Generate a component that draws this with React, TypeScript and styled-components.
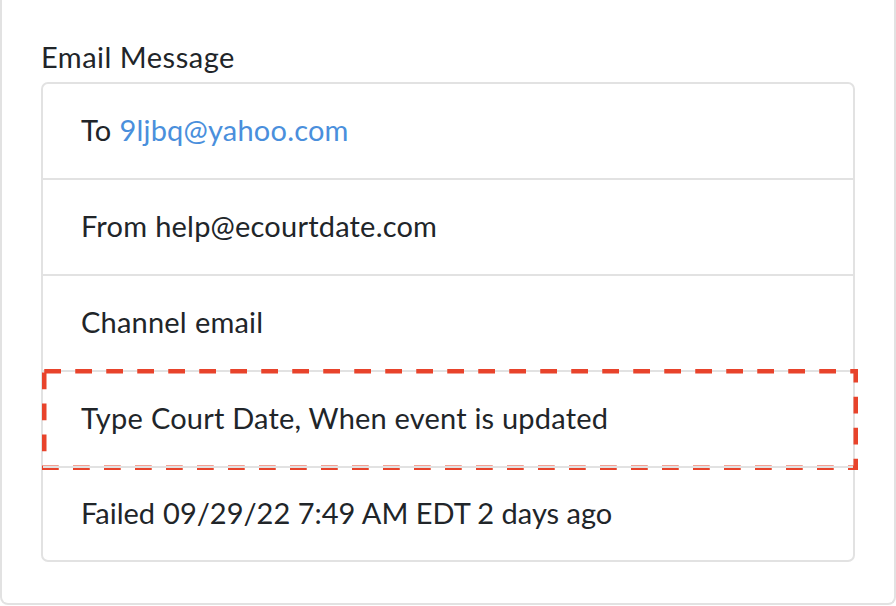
import React from 'react'
import styled, { createGlobalStyle } from 'styled-components'

const GlobalStyle = createGlobalStyle`
  html, body {
    margin: 0;
    padding: 0;
    background: #ffffff;
  }

  body {
    font-family: Lato, 'Noto Sans', sans-serif;
    color: #212529;
    -webkit-font-smoothing: antialiased;
  }
`

const Card = styled.section`
  box-sizing: border-box;
  width: 896px;
  height: 605px;
  border: 2px solid #e2e2e2;
  border-top: none;
  border-radius: 0 0 8px 8px;
  padding: 0 39px 0 39px;
`

const Title = styled.h5`
  margin: 0;
  padding-top: 41px;
  height: 41px;
  line-height: 32px;
  font-size: 29px;
  font-weight: 400;
  letter-spacing: 0.5px;
`

const List = styled.ul`
  list-style: none;
  margin: 0;
  padding: 0;
  width: 814px;
  box-sizing: border-box;
  border: 2px solid #e2e2e2;
  border-radius: 7px;
`

const Row = styled.li<{ $height?: number; $spacing?: number }>`
  position: relative;
  display: flex;
  align-items: center;
  height: ${(p) => (p.$height ?? 94) - 3}px;
  padding: 0 38px 3px;
  font-size: 29px;
  letter-spacing: ${(p) => p.$spacing ?? 0.2}px;
  line-height: 1;
  border-top: 2px solid #e2e2e2;

  &:first-child {
    border-top: none;
  }
`

const Label = styled.span`
  margin-right: 8px;
`

const Link = styled.a`
  color: #4a8fdc;
  text-decoration: none;
`

const Highlight = styled.svg`
  position: absolute;
  left: -1px;
  top: -3px;
  width: 816px;
  height: 101px;
  pointer-events: none;
`

const rows = [
  { label: 'From', value: 'help@ecourtdate.com' },
  { label: 'Channel', value: 'email' },
]

const App = () => {
  return (
    <>
      <GlobalStyle />
      <Card>
        <Title>Email Message</Title>
        <List>
          <Row>
            <Label>To</Label>
            <Link href="#">9ljbq@yahoo.com</Link>
          </Row>
          {rows.map((r) => (
            <Row key={r.label}>
              <Label>{r.label}</Label>
              {r.value}
            </Row>
          ))}
          <Row>
            <Label>Type</Label>
            Court Date, When event is updated
            <Highlight viewBox="0 0 816 101">
              <rect
                x="2.25"
                y="2.25"
                width="811.5"
                height="96.5"
                fill="none"
                stroke="#e8432b"
                strokeWidth="4.5"
                strokeDasharray="16.75 14.25"
              />
            </Highlight>
          </Row>
          <Row $height={92} $spacing={0}>
            <Label>Failed</Label>
            09/29/22 7:49 AM EDT 2 days ago
          </Row>
        </List>
      </Card>
    </>
  )
}

export default App
